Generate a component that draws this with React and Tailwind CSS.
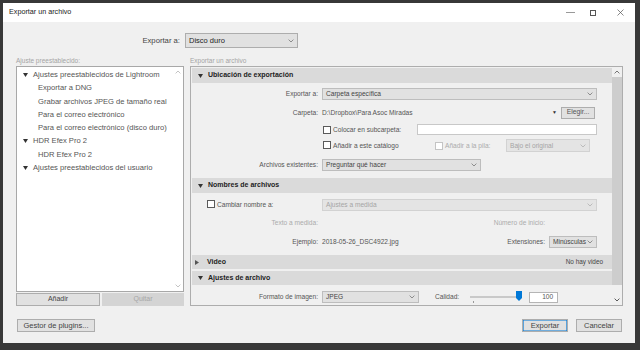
import React from 'react';

const Chevron = ({ up = false, className = '' }) => (
  <svg width="6" height="4" viewBox="0 0 6 4" className={className}>
    <path d={up ? 'M0.6 3.4 L3 1 L5.4 3.4' : 'M0.6 0.6 L3 3 L5.4 0.6'} fill="none" stroke="currentColor" strokeWidth="0.8" />
  </svg>
);

const Tri = ({ open = true, className = '' }) =>
  open ? (
    <svg width="5" height="4" viewBox="0 0 5 4" className={className}>
      <path d="M0 0 H5 L2.5 4 Z" fill="currentColor" />
    </svg>
  ) : (
    <svg width="4" height="5" viewBox="0 0 4 5" className={className}>
      <path d="M0 0 V5 L4 2.5 Z" fill="currentColor" />
    </svg>
  );

const Select = ({ value, className = '', disabled = false }) => (
  <div
    className={`flex items-center justify-between border px-[3px] text-[6.6px] ${
      disabled ? 'border-[#d2d2d2] bg-[#e4e4e4] text-[#a4a4a4]' : 'border-[#bdbdbd] bg-[#e1e1e1] text-[#444]'
    } ${className}`}
  >
    <span>{value}</span>
    <Chevron className={disabled ? 'text-[#b0b0b0]' : 'text-[#777]'} />
  </div>
);

const Check = ({ disabled = false }) => (
  <div className={`h-[8px] w-[8px] shrink-0 border bg-white ${disabled ? 'border-[#c4c4c4]' : 'border-[#5a5a5a]'}`} />
);

const Header = ({ title, open = true, right, className = '' }) => (
  <div className={`flex items-center bg-[#dadada] text-[7px] font-bold text-[#222] ${className}`}>
    {open ? <Tri className="ml-[6px] mr-[5px] text-[#333]" /> : <Tri open={false} className="ml-[3px] mr-[8px] text-[#555]" />}
    <span>{title}</span>
    {right ? <span className="ml-auto pr-[9px] text-[6.4px] font-normal text-[#444]">{right}</span> : null}
  </div>
);

const Label = ({ children, muted = false }) => (
  <div className={`w-[127px] shrink-0 pr-[1px] text-right text-[6.6px] ${muted ? 'text-[#ababab]' : 'text-[#555]'}`}>{children}</div>
);

const tree = [
  { t: 'Ajustes preestablecidos de Lightroom', top: true },
  { t: 'Exportar a DNG' },
  { t: 'Grabar archivos JPEG de tamaño real' },
  { t: 'Para el correo electrónico' },
  { t: 'Para el correo electrónico (disco duro)' },
  { t: 'HDR Efex Pro 2', top: true },
  { t: 'HDR Efex Pro 2' },
  { t: 'Ajustes preestablecidos del usuario', top: true },
];

const Btn = ({ children, className = '' }) => (
  <div className={`flex h-[13px] items-center justify-center border border-[#adadad] bg-[#e1e1e1] text-[7.5px] text-[#444] ${className}`}>
    {children}
  </div>
);

export default function App() {
  return (
    <div className="h-[350px] w-[640px] overflow-hidden bg-[#383838] pb-[7px] pl-[3px] pr-[5px] pt-[3px] font-['Liberation_Sans',Arial,sans-serif]">
      <div className="flex h-[340px] w-[632px] flex-col bg-[#f0f0f0]">
        {/* title bar */}
        <div className="flex h-[19px] shrink-0 items-center bg-white pl-[6px] text-[7.2px] text-[#222]">
          <span>Exportar un archivo</span>
          <div className="ml-auto flex items-center">
            <div className="h-[0.7px] w-[9px] bg-[#999]" />
            <div className="ml-[15px] h-[6px] w-[6px] border-[0.7px] border-[#555]" />
            <svg width="7" height="7" viewBox="0 0 7 7" className="ml-[21px] mr-[11px] text-[#555]">
              <path d="M0.5 0.5 L6.5 6.5 M6.5 0.5 L0.5 6.5" stroke="currentColor" strokeWidth="0.7" />
            </svg>
          </div>
        </div>

        {/* Exportar a */}
        <div className="mt-[11px] flex h-[15px] items-center">
          <div className="w-[182px] pr-[5px] text-right text-[7.7px] text-[#444]">Exportar a:</div>
          <div className="flex h-[15px] w-[113px] items-center justify-between border border-[#adadad] bg-[#e1e1e1] px-[3px] text-[7.5px] text-[#222]">
            <span>Disco duro</span>
            <Chevron className="text-[#777]" />
          </div>
        </div>

        <div className="mt-[7px] flex h-[11px] items-center pl-[13px] text-[6.5px] text-[#a4a4a4]">
          <span className="w-[174px]">Ajuste preestablecido:</span>
          <span>Exportar un archivo</span>
        </div>

        {/* main */}
        <div className="flex h-[240px] pl-[13px]">
          <div className="flex w-[168px] flex-col">
            <div className="flex h-[226px] border border-[#a8a8a8] bg-white">
              <div className="flex-1 pt-[1px] text-[7.6px] text-[#555]">
                {tree.map((it, i) => (
                  <div key={i} className={`flex h-[13.3px] items-center ${it.top ? 'pl-[6px]' : 'pl-[21px]'}`}>
                    {it.top ? <Tri className="mr-[5px] text-[#333]" /> : null}
                    <span className="whitespace-nowrap">{it.t}</span>
                  </div>
                ))}
              </div>
              <div className="flex w-[10px] flex-col items-center justify-between py-[3px] text-[#b5b5b5]">
                <Chevron up />
                <Chevron />
              </div>
            </div>
            <div className="mt-[1px] flex h-[12.5px] gap-[2px]">
              <Btn className="h-[12.5px] flex-1 text-[7px]">Añadir</Btn>
              <div className="flex h-[12.5px] flex-1 items-center justify-center bg-[#d4d4d4] text-[7px] text-[#a6a6a6]">Quitar</div>
            </div>
          </div>

          {/* right panel */}
          <div className="ml-[6px] flex h-[240px] w-[433px] border border-[#adadad]">
            <div className="flex-1 overflow-hidden pl-[1px] pt-[1px]">
              <Header title="Ubicación de exportación" className="h-[15px]" />
              <div className="pt-[2px]">
                <div className="flex h-[18px] items-center">
                  <Label>Exportar a:</Label>
                  <Select value="Carpeta específica" className="ml-[3px] h-[12px] w-[275px]" />
                </div>
                <div className="flex h-[19px] items-center pr-[17px]">
                  <Label>Carpeta:</Label>
                  <span className="ml-[3px] text-[6.6px] text-[#555]">D:\Dropbox\Para Asoc Miradas</span>
                  <span className="ml-auto mr-[4px] text-[5px] text-[#333]">▼</span>
                  <div className="flex h-[12px] w-[34px] items-center justify-center border border-[#adadad] bg-[#e1e1e1] text-[6.8px] text-[#555]">
                    Elegir...
                  </div>
                </div>
                <div className="flex h-[15px] items-center pr-[15px]">
                  <div className="w-[131px] shrink-0" />
                  <Check />
                  <span className="ml-[2px] text-[6.6px] text-[#555]">Colocar en subcarpeta:</span>
                  <div className="ml-auto h-[11px] w-[180px] border border-[#c8c8c8] bg-white" />
                </div>
                <div className="flex h-[17px] items-center">
                  <div className="w-[131px] shrink-0" />
                  <div className="flex w-[112px] items-center">
                    <Check />
                    <span className="ml-[2px] text-[6.6px] text-[#555]">Añadir a este catálogo</span>
                  </div>
                  <Check disabled />
                  <span className="ml-[2px] w-[61px] text-[6.6px] text-[#ababab]">Añadir a la pila:</span>
                  <Select value="Bajo el original" disabled className="h-[13px] w-[84px]" />
                </div>
                <div className="flex h-[22px] items-center">
                  <Label>Archivos existentes:</Label>
                  <Select value="Preguntar qué hacer" className="ml-[3px] h-[12px] w-[159px]" />
                </div>
              </div>

              <Header title="Nombres de archivos" className="mt-[2px] h-[15px]" />
              <div>
                <div className="flex h-[23px] items-center">
                  <div className="flex w-[130px] shrink-0 items-center pl-[15px]">
                    <Check />
                    <span className="ml-[2px] text-[6.6px] text-[#555]">Cambiar nombre a:</span>
                  </div>
                  <Select value="Ajustes a medida" disabled className="h-[12px] w-[275px]" />
                </div>
                <div className="flex h-[14px] items-center">
                  <Label muted>Texto a medida:</Label>
                  <div className="ml-[3px] w-[223px] text-right text-[6.6px] text-[#ababab]">Número de inicio:</div>
                </div>
                <div className="flex h-[23px] items-center pr-[15px]">
                  <Label>Ejemplo:</Label>
                  <span className="ml-[3px] text-[6.6px] text-[#555]">2018-05-26_DSC4922.jpg</span>
                  <span className="ml-auto mr-[4px] text-[6.6px] text-[#555]">Extensiones:</span>
                  <Select value="Minúsculas" className="h-[12px] w-[48px]" />
                </div>
              </div>

              <Header title="Video" open={false} right="No hay video" className="mt-[2px] h-[14px]" />
              <Header title="Ajustes de archivo" className="mt-[2px] h-[14px]" />
              <div className="flex h-[24px] items-center">
                <Label>Formato de imagen:</Label>
                <Select value="JPEG" className="ml-[3px] h-[12px] w-[97px]" />
                <span className="ml-[16px] text-[6.6px] text-[#555]">Calidad:</span>
                <div className="relative ml-[11px] h-[12px] w-[52px]">
                  <div className="mt-[5px] h-[2px] w-[50px] border-[0.5px] border-[#c9c9c9] bg-[#e6e6e6]" />
                  <div className="ml-[3px] mt-[3px] h-[2px] w-[0.7px] bg-[#999]" />
                  <svg width="6" height="10" viewBox="0 0 6 10" className="absolute left-[46px] top-0">
                    <path d="M0 0 H6 V7 L3 10 L0 7 Z" fill="#0078d7" />
                  </svg>
                </div>
                <div className="ml-[7px] flex h-[11px] w-[29px] items-center justify-end border border-[#b5b5b5] bg-white pr-[4px] text-[6.6px] text-[#555]">
                  100
                </div>
              </div>
            </div>
            <div className="flex w-[10px] flex-col">
              <div className="flex h-[10px] items-center justify-center text-[#555]">
                <Chevron up />
              </div>
              <div className="h-[208px] bg-[#cdcdcd]" />
              <div className="flex-1" />
              <div className="flex h-[10px] items-center justify-center text-[#333]">
                <Chevron />
              </div>
            </div>
          </div>
        </div>

        {/* bottom buttons */}
        <div className="mt-[13px] flex pl-[14px] pr-[13px]">
          <Btn className="w-[78px]">Gestor de plugins...</Btn>
          <Btn className="ml-auto w-[46px] border-[#0078d7] shadow-[inset_0_0_0_0.6px_#0078d7]">Exportar</Btn>
          <Btn className="ml-[8px] w-[46px]">Cancelar</Btn>
        </div>
      </div>
    </div>
  );
}
